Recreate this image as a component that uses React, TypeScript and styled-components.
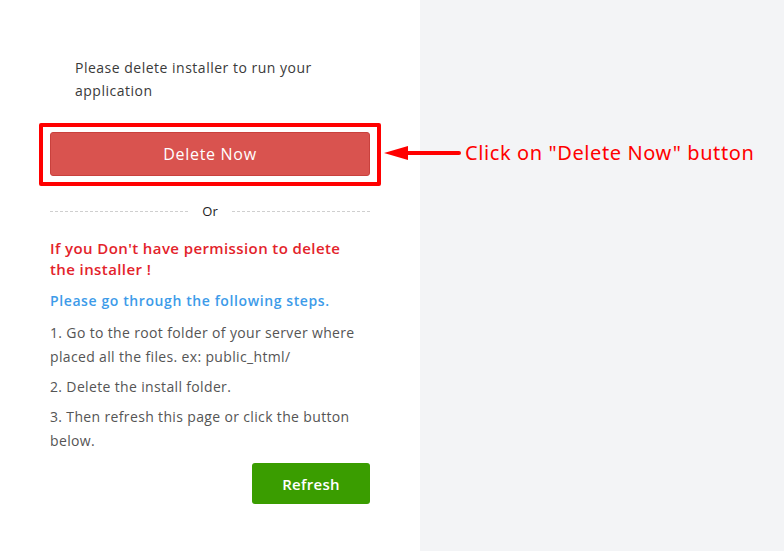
import React from 'react';
import styled, { createGlobalStyle } from 'styled-components';

const GlobalStyle = createGlobalStyle`
	html, body {
		margin: 0;
		padding: 0;
		background: #f3f4f6;
	}
	body {
		font-family: 'Open Sans', 'Noto Sans', sans-serif;
	}
`;

const STEPS = [
	'1. Go to the root folder of your server where placed all the files. ex: public_html/',
	'2. Delete the install folder.',
	'3. Then refresh this page or click the button below.',
];

const App = () => {
	return (
		<>
			<GlobalStyle />
			<Page>
				<Panel>
					<Intro>Please delete installer to run your application</Intro>
					<HighlightBox>
						<DeleteButton>Delete Now</DeleteButton>
						<Callout>
							<svg width="78" height="16" viewBox="0 0 78 16">
								<polygon points="0,8 24,1 24,15" fill="#f00" />
								<line x1="22" y1="8" x2="75" y2="8" stroke="#f00" strokeWidth="4" strokeLinecap="round" />
							</svg>
							<CalloutText>Click on "Delete Now" button</CalloutText>
						</Callout>
					</HighlightBox>
					<Divider>
						<DashLine />
						<span>Or</span>
						<DashLine />
					</Divider>
					<Warning>If you Don't have permission to delete the installer !</Warning>
					<Hint>Please go through the following steps.</Hint>
					{STEPS.map(step => (
						<Step key={step}>{step}</Step>
					))}
					<Actions>
						<RefreshButton>Refresh</RefreshButton>
					</Actions>
				</Panel>
				<Backdrop />
			</Page>
		</>
	);
};

const Page = styled.div`
	display: flex;
	width: 784px;
	height: 551px;
	overflow: hidden;
`;

const Panel = styled.div`
	width: 320px;
	padding: 56px 50px 0 50px;
	background: #fff;
	display: flex;
	flex-direction: column;
`;

const Backdrop = styled.div`
	flex: 1;
	background: #f3f4f6;
`;

const Intro = styled.p`
	margin: 0 0 21px 25px;
	padding-right: 20px;
	font-size: 14px;
	line-height: 23px;
	letter-spacing: 0.5px;
	color: #3a3a3a;
`;

const HighlightBox = styled.div`
	position: relative;
	margin: 0 -11px;
	padding: 5px 7px 6px;
	border: 4px solid #f00;
	border-radius: 2px;
`;

const DeleteButton = styled.button`
	display: block;
	width: 100%;
	height: 44px;
	border: 1px solid #c9413d;
	border-radius: 3px;
	background: #d9534f;
	color: #fff;
	font-family: inherit;
	font-size: 16px;
	letter-spacing: 0.7px;
	cursor: pointer;
`;

const Callout = styled.div`
	position: absolute;
	left: 341px;
	top: 12px;
	display: flex;
	align-items: center;
	gap: 3px;
	white-space: nowrap;
`;

const CalloutText = styled.span`
	font-family: 'Noto Sans', sans-serif;
	font-size: 20px;
	letter-spacing: 0.6px;
	color: #f00;
`;

const Divider = styled.div`
	display: flex;
	align-items: center;
	gap: 14px;
	margin: 16px 0 18px;
	font-size: 13px;
	color: #222;
`;

const DashLine = styled.div`
	flex: 1;
	border-top: 1px dashed #cfcfcf;
`;

const Warning = styled.h4`
	margin: 0 0 9px;
	padding-right: 20px;
	font-size: 15px;
	line-height: 21px;
	font-weight: 600;
	letter-spacing: 0.4px;
	color: #e3232b;
`;

const Hint = styled.p`
	margin: 0 0 8px;
	font-size: 14px;
	line-height: 24px;
	font-weight: 600;
	letter-spacing: 0.6px;
	color: #3d9be9;
`;

const Step = styled.p`
	margin: 0 0 6px;
	font-size: 14px;
	line-height: 24px;
	letter-spacing: 0.35px;
	color: #555;
`;

const Actions = styled.div`
	display: flex;
	justify-content: flex-end;
	margin-top: 4px;
`;

const RefreshButton = styled.button`
	width: 118px;
	height: 41px;
	border: none;
	border-radius: 3px;
	background: #3a9d00;
	color: #fff;
	font-family: inherit;
	font-size: 15px;
	font-weight: 600;
	letter-spacing: 0.3px;
	cursor: pointer;
`;

export default App;
